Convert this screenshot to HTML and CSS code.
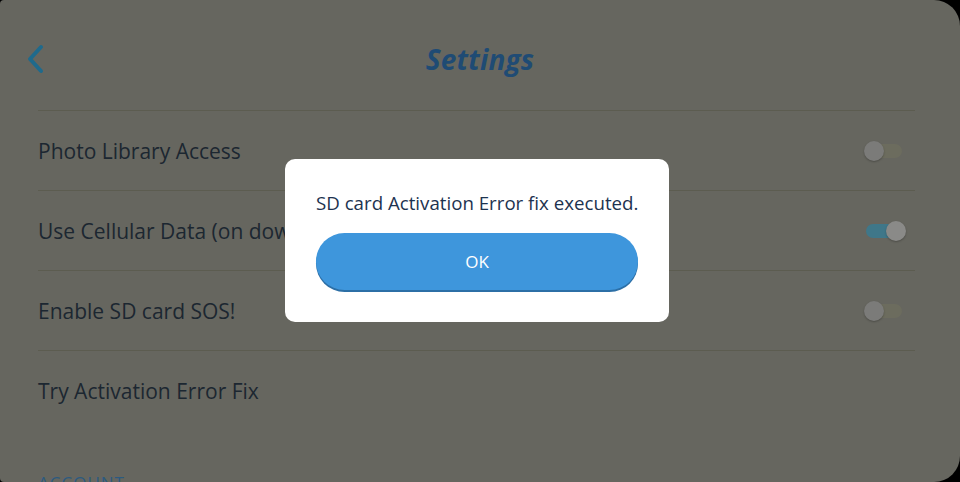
FILE: index.html
```html
<!DOCTYPE html>
<html lang="en">
<head>
    <meta charset="UTF-8">
    <meta name="viewport" content="width=device-width, initial-scale=1.0">
    <title>Settings</title>
    <link rel="stylesheet" href="styles.css">
</head>
<body>
    <div class="screen">
        <div class="header">
            <svg class="back" width="20" height="30" viewBox="0 0 20 30">
                <path d="M16 3 L5 15 L16 27" fill="none" stroke="#1f6a8c" stroke-width="4" stroke-linecap="round" stroke-linejoin="round"/>
            </svg>
            <h1>Settings</h1>
        </div>
        <div class="list">
            <div class="row">
                <span>Photo Library Access</span>
                <span class="toggle"><span class="thumb"></span></span>
            </div>
            <div class="row">
                <span>Use Cellular Data (on downloads)</span>
                <span class="toggle on"><span class="thumb"></span></span>
            </div>
            <div class="row">
                <span>Enable SD card SOS!</span>
                <span class="toggle"><span class="thumb"></span></span>
            </div>
            <div class="row">
                <span>Try Activation Error Fix</span>
            </div>
        </div>
        <div class="section">ACCOUNT</div>

        <div class="dialog">
            <p>SD card Activation Error fix executed.</p>
            <button class="ok">OK</button>
        </div>
    </div>
</body>
</html>
```

FILE: styles.css
```css
html, body {
    margin: 0;
    padding: 0;
    background: #000;
}
body {
    font-family: "Open Sans", "Noto Sans", sans-serif;
    width: 960px;
    height: 482px;
    overflow: hidden;
}
.screen {
    position: relative;
    width: 960px;
    height: 482px;
    background: #66665f;
    border-radius: 4px 26px 26px 4px;
    overflow: hidden;
}
.header {
    position: relative;
    height: 110px;
    display: flex;
    align-items: center;
    justify-content: center;
}
.back {
    position: absolute;
    left: 25px;
    top: 44px;
}
h1 {
    margin: 0;
    margin-top: 8px;
    font-size: 28px;
    font-weight: 700;
    font-style: italic;
    color: #1f4b74;
    letter-spacing: 0.2px;
}
.list {
    margin: 0 45px 0 38px;
}
.row {
    height: 79px;
    border-top: 1px solid #5c5c50;
    display: flex;
    align-items: center;
    justify-content: space-between;
    font-size: 21px;
    color: #1c2731;
}
.toggle {
    position: relative;
    width: 36px;
    height: 14px;
    margin-right: 13px;
    border-radius: 7px;
    background: #6c6c5e;
}
.toggle .thumb {
    position: absolute;
    left: -2px;
    top: -3px;
    width: 20px;
    height: 20px;
    border-radius: 50%;
    background: #7b7b79;
    box-shadow: 0 1px 2px rgba(0, 0, 0, 0.25);
}
.toggle.on {
    background: #3f7789;
}
.toggle.on .thumb {
    left: 20px;
    background: #8a8a88;
}
.section {
    margin: 41px 0 0 38px;
    font-size: 17px;
    color: #2c5a80;
    letter-spacing: 1px;
}
.dialog {
    position: absolute;
    left: 285px;
    top: 159px;
    width: 384px;
    height: 163px;
    box-sizing: border-box;
    background: #fff;
    border-radius: 10px;
    padding: 31px 31px 0 31px;
    text-align: center;
}
.dialog p {
    margin: 0 0 18px;
    font-size: 18.7px;
    color: #1d3350;
    white-space: nowrap;
}
.ok {
    display: block;
    width: 322px;
    height: 57px;
    border: none;
    border-radius: 29px;
    background: #3e96dc;
    box-shadow: 0 2px 0 #2c6fa6;
    color: #fff;
    font-family: "Open Sans", "Noto Sans", sans-serif;
    font-size: 17px;
}
```
